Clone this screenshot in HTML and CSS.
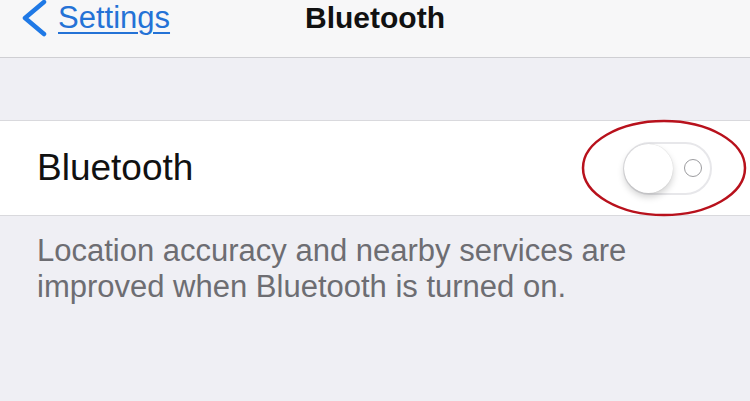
FILE: index.html
```html
<!DOCTYPE html>
<html lang="en">
<head>
  <meta charset="UTF-8">
  <meta name="viewport" content="width=device-width, initial-scale=1.0">
  <title>Bluetooth</title>
  <link rel="stylesheet" href="styles.css">
</head>
<body>
  <div class="navbar">
    <a class="back" href="#">
      <svg class="chevron" width="28" height="37" viewBox="0 0 28 37">
        <polyline points="24,2 5,18 24,34" fill="none" stroke="#1f79e6" stroke-width="4.5" stroke-linecap="round" stroke-linejoin="round"/>
      </svg>
      <span class="back-text">Settings</span>
    </a>
    <div class="title">Bluetooth</div>
    <div></div>
  </div>

  <div class="spacer"></div>

  <div class="row">
    <span class="label">Bluetooth</span>
    <div class="switch">
      <div class="knob"></div>
      <div class="off-mark"></div>
    </div>
    <svg class="circle-note" width="170" height="104" viewBox="0 0 170 104">
      <ellipse cx="85" cy="52" rx="81" ry="47" fill="none" stroke="#b8111c" stroke-width="2.5"/>
    </svg>
  </div>

  <p class="footer">Location accuracy and nearby services are improved when Bluetooth is turned on.</p>
</body>
</html>
```

FILE: styles.css
```css
body { margin: 0; background: #efeff4; font-family: "Liberation Sans", Arial, sans-serif; overflow: hidden; }

.navbar { display: grid; grid-template-columns: 1fr auto 1fr; height: 57px; background: #f7f7f8; border-bottom: 1px solid #cfcfd3; }
.back { display: flex; align-items: flex-start; gap: 10px; padding-left: 20px; color: #2472d6; text-decoration: none; }
.chevron { display: block; }
.back-text { font-size: 31px; line-height: 35px; text-decoration: underline; text-underline-offset: 4px; text-decoration-thickness: 2px; }
.title { font-size: 30px; line-height: 35px; font-weight: bold; color: #111; }

.spacer { height: 62px; }

.row { position: relative; display: flex; align-items: center; justify-content: space-between; height: 94px; padding: 0 38px 0 37px; background: #fff; border-top: 1px solid #d9d9dd; border-bottom: 1px solid #d9d9dd; }
.label { font-size: 37px; color: #111; }

.switch { box-sizing: border-box; display: flex; align-items: center; justify-content: space-between; width: 89px; height: 53px; border: 2px solid #e7e7ea; border-radius: 27px; background: #fff; }
.knob { width: 49px; height: 49px; margin-left: -1px; border-radius: 50%; background: #fff; box-shadow: 0 4px 7px rgba(0,0,0,0.18), 0 0 1px rgba(0,0,0,0.2); }
.off-mark { box-sizing: border-box; width: 18px; height: 18px; margin-right: 8px; border: 1.5px solid #9c9c9f; border-radius: 50%; }

.circle-note { position: absolute; left: 579px; top: -5px; }

.footer { margin: 0; padding: 17px 37px 0; font-size: 31px; line-height: 36px; color: #6d6d72; }
```
